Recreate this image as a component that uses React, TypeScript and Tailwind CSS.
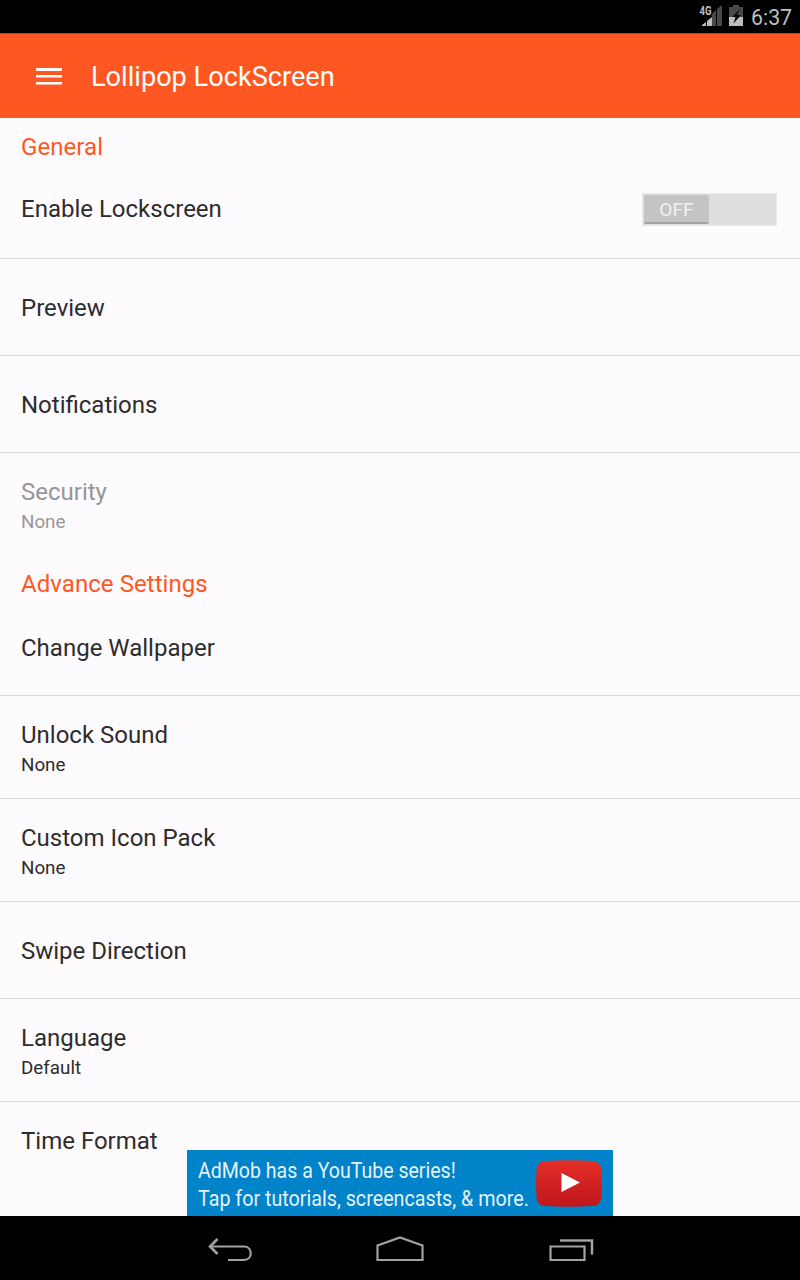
import type { ReactNode } from 'react';

type RowProps = {
  title: string;
  summary?: string;
  disabled?: boolean;
  divider?: boolean;
  raised?: boolean;
  children?: ReactNode;
};

function SectionHeader({ title }: { title: string }) {
  return (
    <h2 className="flex h-11 shrink-0 items-end px-[21px] text-2xl leading-[30px] tracking-[0.06px] text-[#ff5722]">
      {title}
    </h2>
  );
}

function Row({ title, summary, disabled = false, divider = true, raised = false, children }: RowProps) {
  return (
    <div
      className={`flex shrink-0 items-center justify-between pr-[23px] pl-[21px] ${
        summary ? 'h-[102px]' : 'h-24'
      } ${divider ? 'box-content border-b border-[#dedbde]' : ''} ${
        disabled ? 'text-[#979597]' : 'text-[#2d2c2d]'
      }`}
    >
      <div className={raised ? 'pb-0.5' : summary ? 'pt-[5px]' : 'pt-0.5'}>
        <div className="text-2xl leading-8">{title}</div>
        {summary && <div className="text-[18.8px] leading-[29px]">{summary}</div>}
      </div>
      {children}
    </div>
  );
}

function OffSwitch() {
  return (
    <button className="mb-[2px] flex h-[33px] w-[135px] items-stretch border border-[#eae8ea] bg-[#dedede] pt-px pb-px pl-px">
      <span className="flex w-[65px] items-center justify-center rounded-[2px] border-b-2 border-[#a4a2a4] bg-[#c5c3c5] pt-1 text-[19.2px] leading-6 text-[#f3f1f3]">
        OFF
      </span>
    </button>
  );
}

function StatusBar() {
  return (
    <div className="flex h-[33px] shrink-0 justify-end bg-black">
      <svg width="50" height="33" viewBox="0 0 50 33">
        <path d="M3 26v-1l4-3v4zM8 26v-5l5-4v9z" fill="#bebebe" />
        <path d="M13 26V14l4-4v16zM18 26V9l5-4v21z" fill="#484a48" />
        <text
          x="0.5"
          y="15"
          fill="#bebebe"
          fontFamily="Roboto"
          fontWeight="700"
          fontSize="12"
          textLength="12"
          lengthAdjust="spacingAndGlyphs"
        >
          4G
        </text>
        <path d="M34 5h6v2h4v10H30V7h4z" fill="#484a48" />
        <path d="M30 17h14v9H30z" fill="#bebebe" />
        <path d="M41 9 33 17h3.5l-2 6.500L42 15h-4z" fill="#080808" />
      </svg>
      <span className="w-[51px] pt-[3px] pl-0.5 text-[21.3px] leading-[30px] text-[#bebebe]">6:37</span>
    </div>
  );
}

function AppBar() {
  return (
    <header className="flex h-[85px] shrink-0 items-center border-t border-[#c7441a] bg-[#ff5722] pt-0.5 pl-9 text-white">
      <svg width="26" height="18" viewBox="0 0 26 18" fill="currentColor">
        <path d="M0 0h26v3H0zM0 7h26v2.5H0zM0 14h26v2.500H0z" />
      </svg>
      <h1 className="pl-[29px] text-[27.15px] leading-8">Lollipop LockScreen</h1>
    </header>
  );
}

function AdBanner() {
  return (
    <aside className="mx-auto flex h-[66px] w-[426px] shrink-0 bg-[#0083c9]">
      <p className="w-[338px] shrink-0 pt-1.5 pl-[11px] text-[22.4px] leading-7 whitespace-nowrap text-[#e5f2f9]">
        <span className="block origin-left scale-x-[0.873]">AdMob has a YouTube series!</span>
        <span className="block origin-left scale-x-[0.88]">Tap for tutorials, screencasts, &amp; more.</span>
      </p>
      <svg className="mt-[9px] ml-2.5 shrink-0" width="68" height="49" viewBox="0 0 67 49">
        <defs>
          <linearGradient id="play" x1="0" y1="0" x2="0" y2="1">
            <stop stopColor="#e52d27" />
            <stop offset="1" stopColor="#bf171d" />
          </linearGradient>
        </defs>
        <path
          d="M9 2Q33 .5 58 2 64 3 66 10 67 24 66 39 64 46 58 47 33 48.5 9 47 2 46 1 39 0 24 1 10 2 3 9 2Z"
          fill="url(#play)"
        />
        <path d="m26 14 18.5 9.500L26 33z" fill="white" />
      </svg>
    </aside>
  );
}

function NavigationBar() {
  return (
    <nav className="flex h-16 shrink-0 bg-black">
      <svg width="800" height="64" viewBox="0 0 800 64" fill="none" stroke="#a3a3a3">
        <path d="M210 30.5h34c9 0 9 13.5 0 13.5h-16" strokeWidth="2.2" />
        <path d="m217.5 23-7.5 7.5 7.5 7.5" strokeWidth="2.5" />
        <path d="M377.5 44V29.500L400 21.500 422.500 29.500V44z" strokeWidth="2.2" />
        <path d="M550.500 30.500h34V44h-34z" strokeWidth="2.2" />
        <path d="M560 24.500h32v14" strokeWidth="3.2" stroke="#444" />
        <path d="M560 24.500h32v14" strokeWidth="2" />
      </svg>
    </nav>
  );
}

export default function App() {
  return (
    <div className="flex h-[1280px] w-[800px] flex-col overflow-hidden bg-[#fefbfe] font-['Roboto',sans-serif]">
      <StatusBar />
      <AppBar />
      <main className="flex min-h-0 flex-1 flex-col">
        <SectionHeader title="General" />
        <Row title="Enable Lockscreen" raised>
          <OffSwitch />
        </Row>
        <Row title="Preview" />
        <Row title="Notifications" />
        <Row title="Security" summary="None" disabled divider={false} />
        <SectionHeader title="Advance Settings" />
        <Row title="Change Wallpaper" />
        <Row title="Unlock Sound" summary="None" />
        <Row title="Custom Icon Pack" summary="None" />
        <Row title="Swipe Direction" />
        <Row title="Language" summary="Default" />
        <div className="shrink-0 pt-[27px] pl-[21px] text-2xl leading-6 text-[#2d2c2d]">Time Format</div>
      </main>
      <AdBanner />
      <NavigationBar />
    </div>
  );
}
